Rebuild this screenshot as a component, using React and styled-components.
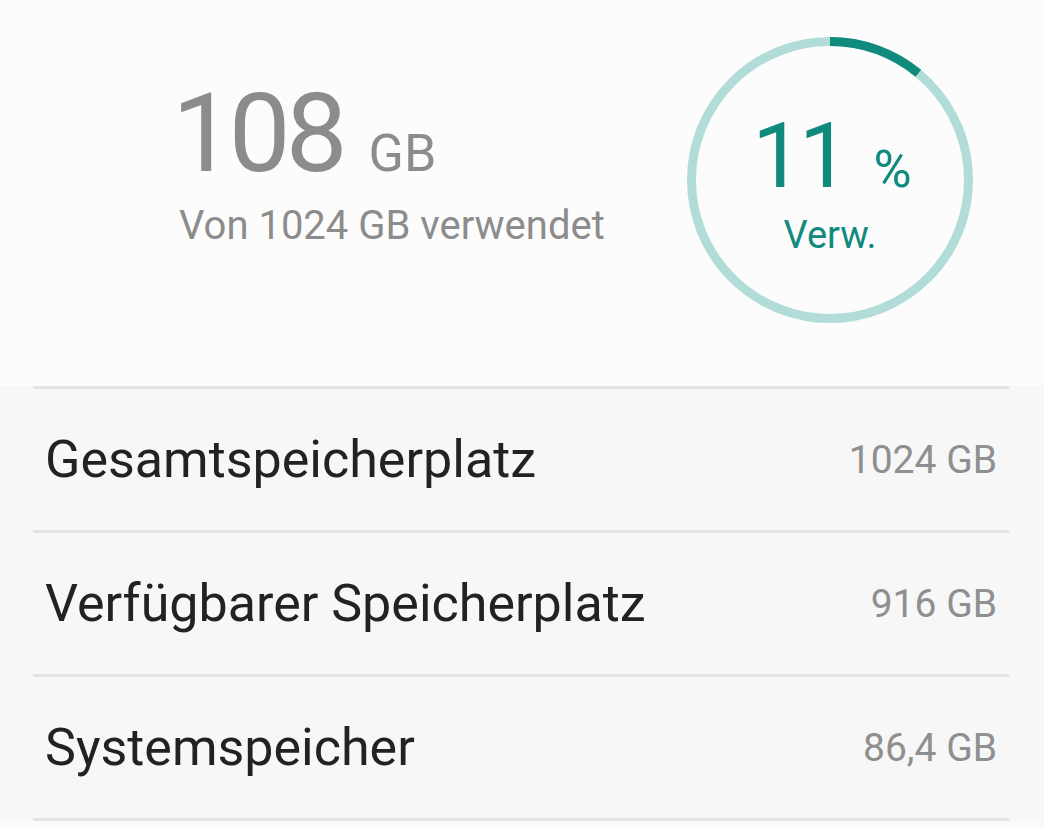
import styled, { createGlobalStyle } from 'styled-components';

const TEAL = '#0f8a7c';
const TEAL_LIGHT = '#b2dcd8';

const GlobalStyle = createGlobalStyle`
  html, body {
    margin: 0;
    padding: 0;
    background: #f7f7f7;
    font-family: Roboto, "Noto Sans", sans-serif;
  }
`;

const rows = [
  { label: 'Gesamtspeicherplatz', value: '1024 GB' },
  { label: 'Verfügbarer Speicherplatz', value: '916 GB' },
  { label: 'Systemspeicher', value: '86,4 GB' },
];

const UsageRing = ({ percent, size = 286, stroke = 9 }) => {
  const r = (size - stroke) / 2;
  const c = 2 * Math.PI * r;
  return (
    <RingBox $size={size}>
      <svg width={size} height={size} viewBox={`0 0 ${size} ${size}`}>
        <circle
          cx={size / 2}
          cy={size / 2}
          r={r}
          fill="none"
          stroke={TEAL_LIGHT}
          strokeWidth={stroke}
        />
        <circle
          cx={size / 2}
          cy={size / 2}
          r={r}
          fill="none"
          stroke={TEAL}
          strokeWidth={stroke}
          strokeDasharray={`${(c * percent) / 100} ${c}`}
          transform={`rotate(-90 ${size / 2} ${size / 2})`}
        />
      </svg>
      <RingLabel>
        <RingValue>
          {percent}
          <RingUnit>%</RingUnit>
        </RingValue>
        <RingCaption>Verw.</RingCaption>
      </RingLabel>
    </RingBox>
  );
};

const App = () => {
  return (
    <Page>
      <GlobalStyle />
      <Header>
        <Summary>
          <UsedLine>
            <UsedNumber>108</UsedNumber>
            <UsedUnit>GB</UsedUnit>
          </UsedLine>
          <UsedCaption>Von 1024 GB verwendet</UsedCaption>
        </Summary>
        <UsageRing percent={11} />
      </Header>

      <List>
        {rows.map((row) => (
          <Row key={row.label}>
            <RowLabel>{row.label}</RowLabel>
            <RowValue>{row.value}</RowValue>
          </Row>
        ))}
      </List>
      <Footer />
    </Page>
  );
};

const Page = styled.div`
  width: 1044px;
  height: 827px;
  overflow: hidden;
  background: #f7f7f7;
`;

const Header = styled.div`
  height: 386px;
  background: #fcfcfc;
  display: flex;
  align-items: flex-start;
  padding: 37px 0 0 172px;
  box-sizing: border-box;
`;

const Summary = styled.div`
  display: flex;
  flex-direction: column;
  width: 515px;
  padding-top: 42px;
`;

const UsedLine = styled.div`
  display: flex;
  align-items: baseline;
  gap: 26px;
  color: #8c8c8c;
`;

const UsedNumber = styled.span`
  font-size: 110px;
  line-height: 110px;
  letter-spacing: -5px;
`;

const UsedUnit = styled.span`
  font-size: 52px;
`;

const UsedCaption = styled.div`
  margin-top: 13px;
  margin-left: 7px;
  font-size: 40px;
  color: #8c8c8c;
`;

const RingBox = styled.div`
  position: relative;
  width: ${(p) => p.$size}px;
  height: ${(p) => p.$size}px;

  svg {
    display: block;
  }
`;

const RingLabel = styled.div`
  position: absolute;
  inset: 0;
  display: flex;
  flex-direction: column;
  align-items: center;
  justify-content: center;
  color: ${TEAL};
  padding-top: 8px;
  box-sizing: border-box;
`;

const RingValue = styled.div`
  display: flex;
  align-items: baseline;
  gap: 28px;
  font-size: 90px;
  line-height: 90px;
  letter-spacing: -4px;
  margin-left: 4px;
`;

const RingUnit = styled.span`
  font-size: 52px;
  letter-spacing: 0;
`;

const RingCaption = styled.div`
  font-size: 38px;
  margin-top: -2px;
`;

const List = styled.div`
  margin: 0 35px 0 33px;
`;

const Row = styled.div`
  display: flex;
  align-items: center;
  justify-content: space-between;
  height: 141px;
  padding: 0 12px 0 12px;
  border-top: 3px solid #e4e4e4;

  &:last-child {
    border-bottom: 3px solid #e4e4e4;
  }
`;

const RowLabel = styled.div`
  font-size: 52px;
  color: #222222;
`;

const RowValue = styled.div`
  font-size: 39px;
  color: #8f8f8f;
`;

const Footer = styled.div`
  height: 20px;
  background: #fafafa;
`;

export default App;
